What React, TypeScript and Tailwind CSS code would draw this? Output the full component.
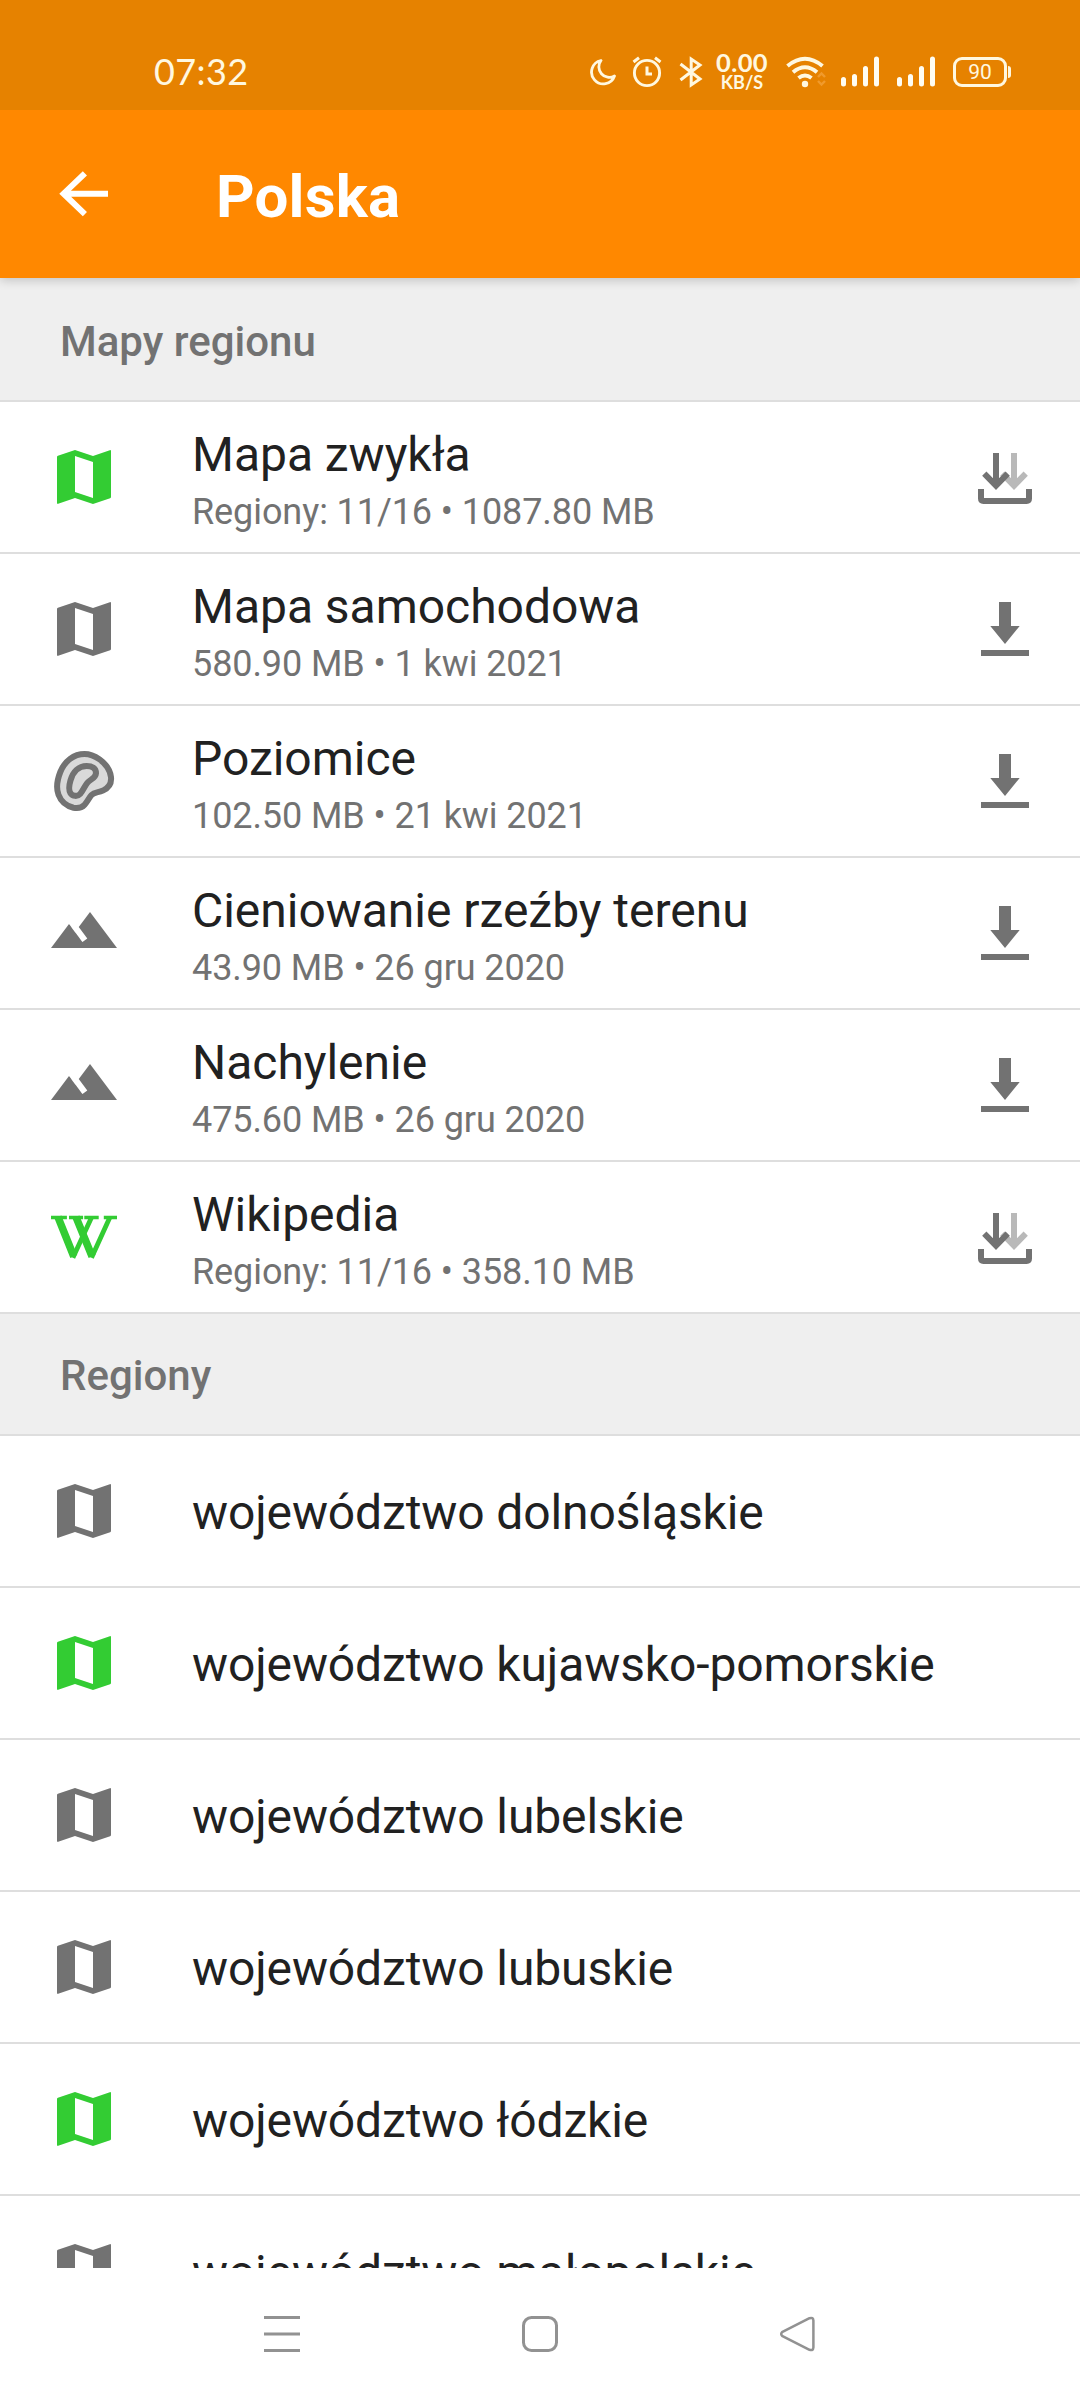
import type { ReactNode } from "react";

const GREEN = "#33cc33";
const GRAY = "#727272";

function Icon({ children }: { children: ReactNode }) {
  return (
    <svg viewBox="0 0 24 24" className="size-[72px] shrink-0">
      {children}
    </svg>
  );
}

function MapIcon({ color }: { color: string }) {
  return (
    <Icon>
      <path
        fill={color}
        fillRule="evenodd"
        d="M3 5.35Q3 5.05 3.3 4.95L9 3L15 5L20.6 3.05Q21 2.95 21 3.3V18.65Q21 18.95 20.7 19.05L15 21L9 19L3.4 20.95Q3 21.05 3 20.7ZM9 5V17L15 19V7Z"
      />
    </Icon>
  );
}

function ContourIcon() {
  return (
    <Icon>
      <g stroke={GRAY} strokeWidth="2" strokeLinejoin="round" fill="#d9d9d9">
        <path d="M12.2 3C8.6 3 5.600 5.300 4.100 9C3 11.800 2.700 14.500 3.500 16.600C4.400 19 6.300 20.400 8.500 20.900C10.100 21.200 11.300 20.900 12.200 19.900C13.200 18.800 13.600 17.700 14.500 16.700C15.500 15.600 16.700 15.900 18.300 15.200C20.200 14.300 21.200 12.600 21 10.700C20.700 8.400 19.300 6.300 17.200 4.800C15.600 3.700 14.100 3 12.200 3Z" />
        <path d="M12.900 7C10.200 7 8.300 8.900 7.500 11.800C7 13.500 6.900 15.200 7.500 16.100C8.200 17.100 9.800 17.300 10.700 16.300C11.800 15.100 12.100 13.800 13.100 12.600C14.100 11.400 15.900 11.100 16 9.400C16 7.800 14.700 7 12.900 7Z" />
      </g>
    </Icon>
  );
}

function MountainIcon() {
  return (
    <Icon>
      <path fill={GRAY} d="M14 5l-3.75 5 2.85 3.8-1.6 1.2C9.81 12.75 7 9 7 9l-6 8h22z" />
    </Icon>
  );
}

function WikipediaIcon() {
  return (
    <Icon>
      <g stroke={GREEN} fill="none">
        <path strokeWidth="1.100" d="M1 5.500H6.300M7 5.500H11.700M12.100 5.500H16.900M18.600 5.500H23" />
        <path strokeWidth="2.500" d="M3.300 5.300L8.600 18.500M9.300 5.300L14.700 18.500" />
        <path strokeWidth="1.600" d="M8.300 18.900L14.500 5.500M14.500 18.900L20.600 5.500" />
      </g>
    </Icon>
  );
}

function DownloadIcon() {
  return (
    <Icon>
      <path fill={GRAY} d="M10 3H14V11H16.9L12 17L7.1 11H10ZM4 19H20V21H4Z" />
    </Icon>
  );
}

function MultiDownloadIcon() {
  return (
    <Icon>
      <g fill="none" strokeWidth="2">
        <path stroke="#b9b9b9" d="M15 4V15M11.100 10.900L15 14.900L18.900 10.900" />
        <path stroke={GRAY} d="M9 4V15M5.100 10.900L9 14.900L12.900 10.900" />
        <path stroke={GRAY} d="M4 16V19.200Q4 20 4.800 20H19.200Q20 20 20 19.200V16" />
      </g>
    </Icon>
  );
}

type MapRow = { title: string; detail: string; icon: ReactNode; multi?: boolean };

const maps: MapRow[] = [
  { title: "Mapa zwykła", detail: "Regiony: 11/16 • 1087.80 MB", icon: <MapIcon color={GREEN} />, multi: true },
  { title: "Mapa samochodowa", detail: "580.90 MB • 1 kwi 2021", icon: <MapIcon color={GRAY} /> },
  { title: "Poziomice", detail: "102.50 MB • 21 kwi 2021", icon: <ContourIcon /> },
  { title: "Cieniowanie rzeźby terenu", detail: "43.90 MB • 26 gru 2020", icon: <MountainIcon /> },
  { title: "Nachylenie", detail: "475.60 MB • 26 gru 2020", icon: <MountainIcon /> },
  { title: "Wikipedia", detail: "Regiony: 11/16 • 358.10 MB", icon: <WikipediaIcon />, multi: true },
];

const regions = [
  { name: "województwo dolnośląskie", saved: false },
  { name: "województwo kujawsko-pomorskie", saved: true },
  { name: "województwo lubelskie", saved: false },
  { name: "województwo lubuskie", saved: false },
  { name: "województwo łódzkie", saved: true },
  { name: "województwo małopolskie", saved: false },
];

function SignalBars() {
  return (
    <svg viewBox="0 0 40 32" className="h-8 w-10">
      <path stroke="#fffdf2" strokeWidth="5" strokeLinecap="round" d="M3.500 23.500V28M14.500 20.500V28M25.500 12.500V28M36.500 3V28" />
    </svg>
  );
}

function StatusBar() {
  return (
    <div className="relative z-20 flex h-[110px] shrink-0 items-center bg-[#e68200] pt-[34px] text-[#fff8e0]">
      <div className="ml-[154px] w-[435px] pb-[3px] font-[Lato] text-[36px] leading-none tracking-[0.4px]">07:32</div>
      <svg viewBox="0 0 28 28" className="h-7 w-7" fill="none" stroke="currentColor" strokeWidth="2.800" strokeLinejoin="round">
        <path d="M12 2.500A11.800 11.800 0 1 0 25.500 18A10.500 10.500 0 0 1 12 2.500Z" />
      </svg>
      <svg viewBox="0 0 30 32" className="ml-[15px] h-8 w-[30px]" fill="none" stroke="currentColor" strokeWidth="2.900">
        <circle cx="15" cy="17" r="12.600" />
        <path d="M15 10.500V18H20M1.500 6L7 1.800M28.500 6L23 1.800" strokeWidth="3" />
      </svg>
      <svg viewBox="0 0 24 32" className="ml-[17px] h-8 w-6" fill="none" stroke="currentColor" strokeWidth="3">
        <path d="M1.500 8L21 23L12.200 29V3L21 9L1.500 24" />
      </svg>
      <div className="ml-[12px] mr-px flex w-[54px] flex-col items-center pb-[2px] font-[Lato] font-bold">
        <span className="text-[25.500px] leading-[23px] tracking-[0.400px]">0.00</span>
        <span className="text-[18px] leading-[17px]">KB/S</span>
      </div>
      <svg viewBox="0 0 40 32" className="ml-[16px] h-8 w-10" fill="none" stroke="currentColor" strokeWidth="4">
        <path d="M1.500 10Q19 -4.500 36.500 10M7 16.200Q19 6.200 31 16.200M12.500 22Q19 17 25.500 22" />
        <circle cx="19" cy="28" r="3.200" fill="currentColor" stroke="none" />
        <path d="M32 21L35.500 17.500L39 21M32 25L35.500 28.500L39 25" stroke="#f09a2c" strokeWidth="2.400" />
      </svg>
      <div className="ml-[14px]"><SignalBars /></div>
      <div className="ml-[16px]"><SignalBars /></div>
      <div className="ml-[17px] flex h-[30px] w-[54px] items-center justify-center rounded-[9px] border-[3px] border-current font-[Roboto] text-[21px] leading-none">
        90
      </div>
      <div className="ml-px h-3 w-[3px] rounded-r bg-current" />
    </div>
  );
}

function SectionHeader({ children }: { children: ReactNode }) {
  return (
    <div className="flex h-[122px] shrink-0 items-center border-b-2 border-[#dedede] bg-[#efefef] pt-[3px] pl-[60px] text-[42px] font-medium leading-[50px] text-[#727272]">
      {children}
    </div>
  );
}

export default function App() {
  return (
    <div className="flex h-[2400px] w-[1080px] flex-col overflow-hidden bg-white font-[Roboto,sans-serif] text-[#212121]">
      <StatusBar />
      <header className="relative z-10 flex h-[168px] shrink-0 items-center bg-[#ff8800] pl-12 text-white shadow-[0_2px_10px_rgba(0,0,0,0.2)]">
        <svg viewBox="0 0 24 24" className="size-[72px]" fill="none" stroke="#fff" strokeWidth="2">
          <path d="M20 11.900H5M12.300 5.100L5.200 11.900L12.300 18.700" />
        </svg>
        <h1 className="ml-24 pt-[5px] text-[60px] font-bold leading-[70px] tracking-[0.200px]">Polska</h1>
      </header>
      <main className="flex h-[1990px] shrink-0 flex-col overflow-hidden">
        <div className="shrink-0 bg-[#efefef] pt-[2px]">
          <SectionHeader>Mapy regionu</SectionHeader>
        </div>
        {maps.map((m) => (
          <div key={m.title} className="flex h-[152px] shrink-0 items-center border-b-2 border-[#dedede] pr-[39px] pl-12">
            {m.icon}
            <div className="ml-[72px] flex-1 pt-[9px]">
              <div className="text-[48px] leading-[56px] tracking-[-0.030px]">{m.title}</div>
              <div className="mt-[5px] text-[36px] leading-[48px] tracking-[-0.080px] text-[#727272]">{m.detail}</div>
            </div>
            {m.multi ? <MultiDownloadIcon /> : <DownloadIcon />}
          </div>
        ))}
        <SectionHeader>Regiony</SectionHeader>
        {regions.map((r) => (
          <div key={r.name} className="flex h-[152px] shrink-0 items-center border-b-2 border-[#dedede] pl-12">
            <MapIcon color={r.saved ? GREEN : GRAY} />
            <div className="ml-[72px] pt-[3px] text-[48px] leading-[56px] tracking-[-0.120px]">{r.name}</div>
          </div>
        ))}
      </main>
      <nav className="flex h-[132px] shrink-0 items-center bg-white pl-[263px]">
        <svg viewBox="0 0 38 38" className="size-[38px]" stroke="#929292" strokeWidth="3">
          <path d="M1 2.500H37M1 19H37M1 35.500H37" />
        </svg>
        <svg viewBox="0 0 38 38" className="ml-[220px] size-[38px]" fill="none" stroke="#929292" strokeWidth="3">
          <rect x="2.500" y="2.500" width="33" height="33" rx="8" />
        </svg>
        <svg viewBox="0 0 38 38" className="ml-[220px] size-[38px]" fill="none" stroke="#929292" strokeWidth="2.500" strokeLinejoin="round">
          <path d="M3 17.200L30.500 3.200Q34.200 2 34.400 5.500V32.500Q34.200 36 30.500 34.800L3 20.800Q1.500 19 3 17.200Z" />
        </svg>
      </nav>
    </div>
  );
}
